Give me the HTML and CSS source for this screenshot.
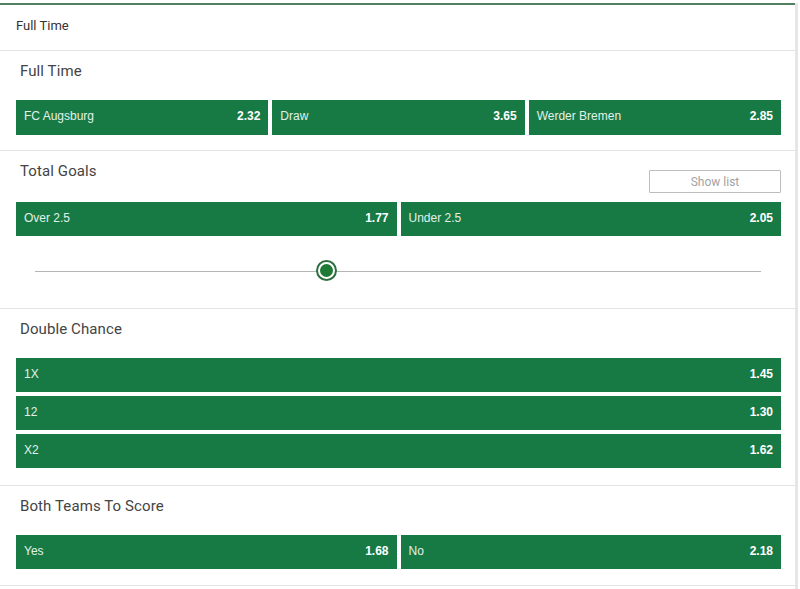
FILE: index.html
```html
<!DOCTYPE html>
<html>
<head>
<meta charset="utf-8">
<link rel="stylesheet" href="styles.css">
</head>
<body>
<div class="panel">
  <div class="topline"></div>
  <div class="page-title">Full Time</div>

  <section class="market market--first">
    <div class="market-head"><h2>Full Time</h2></div>
    <div class="odds-row">
      <button class="odd"><span class="label">FC Augsburg</span><span class="price">2.32</span></button>
      <button class="odd"><span class="label">Draw</span><span class="price">3.65</span></button>
      <button class="odd"><span class="label">Werder Bremen</span><span class="price">2.85</span></button>
    </div>
  </section>

  <section class="market market--goals">
    <div class="market-head market-head--tall"><h2>Total Goals</h2><button class="show-list">Show list</button></div>
    <div class="odds-row">
      <button class="odd"><span class="label">Over 2.5</span><span class="price">1.77</span></button>
      <button class="odd"><span class="label">Under 2.5</span><span class="price">2.05</span></button>
    </div>
    <div class="slider">
      <div class="track"></div>
      <div class="thumb" style="left: 40.5%"></div>
    </div>
  </section>

  <section class="market market--double">
    <div class="market-head"><h2>Double Chance</h2></div>
    <div class="odds-col">
      <button class="odd"><span class="label">1X</span><span class="price">1.45</span></button>
      <button class="odd"><span class="label">12</span><span class="price">1.30</span></button>
      <button class="odd"><span class="label">X2</span><span class="price">1.62</span></button>
    </div>
  </section>

  <section class="market market--last">
    <div class="market-head"><h2>Both Teams To Score</h2></div>
    <div class="odds-row">
      <button class="odd"><span class="label">Yes</span><span class="price">1.68</span></button>
      <button class="odd"><span class="label">No</span><span class="price">2.18</span></button>
    </div>
  </section>
</div>
</body>
</html>
```

FILE: styles.css
```css
html, body {
  margin: 0;
  padding: 0;
  background: #ffffff;
}

body {
  font-family: Roboto, "Liberation Sans", Arial, sans-serif;
  color: #333;
}

.panel {
  width: 795px;
  border-right: 3px solid #e6e6e6;
  min-height: 589px;
  box-sizing: content-box;
}

.topline {
  margin-top: 3px;
  height: 2px;
  background: #4f7f5f;
}

.page-title {
  height: 45px;
  line-height: 42px;
  padding-left: 16px;
  font-size: 13px;
  color: #333;
}

.market {
  border-top: 1px solid #e3e3e3;
  padding: 10px 14px 16px 16px;
}

.market--first {
  padding-bottom: 15px;
}

.market--goals {
  padding-bottom: 0;
}

.market--double {
  padding-bottom: 17px;
}

.market--last {
  border-bottom: 1px solid #e3e3e3;
}

.market-head {
  height: 21px;
  margin-bottom: 18px;
  padding-left: 4px;
  display: flex;
  justify-content: space-between;
  align-items: flex-start;
}

.market-head--tall {
  height: 32px;
  margin-bottom: 9px;
}

.market-head h2 {
  margin: 0;
  font-size: 15px;
  font-weight: 400;
  line-height: 21px;
  color: #444;
  letter-spacing: 0.1px;
}

.show-list {
  margin-top: 9px;
  width: 132px;
  height: 23px;
  border: 1px solid #bdbdbd;
  border-radius: 1px;
  background: #fff;
  color: #a3a3a3;
  font-family: Roboto, "Liberation Sans", Arial, sans-serif;
  font-size: 12px;
  padding: 0;
}

.odds-row {
  display: flex;
  gap: 4px;
}

.odds-row .odd {
  flex: 1 1 0;
  height: 35px;
}

.market--goals .odds-row .odd,
.market--last .odds-row .odd {
  height: 34px;
}

.odds-col {
  display: flex;
  flex-direction: column;
  gap: 4px;
}

.odds-col .odd {
  height: 34px;
}

.odd {
  display: flex;
  justify-content: space-between;
  align-items: center;
  border: none;
  margin: 0;
  padding: 0 8px 3px 8px;
  background: #177a45;
  color: #e4f2ea;
  font-family: "Liberation Sans", Arial, sans-serif;
  font-size: 12px;
  text-align: left;
}

.odd .label {
  color: #e2f1e8;
}

.odd .price {
  color: #ffffff;
  font-weight: 700;
}

.slider {
  position: relative;
  height: 24px;
  margin: 24px 20px 24px 19px;
}

.track {
  position: absolute;
  left: 0;
  right: 0;
  top: 11px;
  height: 1px;
  background: #b5b5b5;
}

.thumb {
  position: absolute;
  top: 2px;
  width: 13px;
  height: 13px;
  margin-left: -11px;
  border-radius: 50%;
  background: #1f7a35;
  border: 2px solid #ffffff;
  box-shadow: 0 0 0 2px #2d6e3f;
}
```
